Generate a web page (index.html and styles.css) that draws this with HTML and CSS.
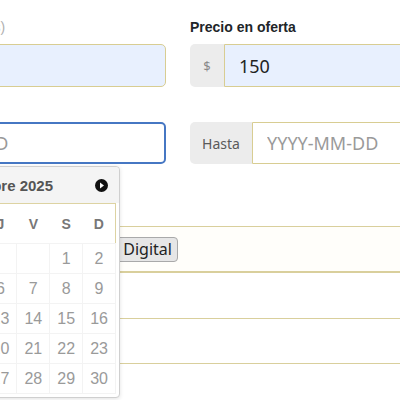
FILE: index.html
```html
<!DOCTYPE html>
<html lang="es">
<head>
<meta charset="utf-8">
<link rel="stylesheet" href="styles.css">
</head>
<body>
<div class="form">
  <div class="row">
    <div class="field">
      <label class="label">Precio base <span class="muted">(sin descuentos)</span></label>
      <div class="group">
        <input class="control autofill" type="text" value="">
      </div>
    </div>
    <div class="field">
      <label class="label">Precio en oferta</label>
      <div class="group">
        <span class="addon addon-sm">$</span>
        <input class="control autofill" type="text" value="150">
      </div>
    </div>
  </div>

  <div class="row row-dates">
    <div class="field">
      <div class="group">
        <span class="addon">Desde</span>
        <input class="control focused" type="text" placeholder="YYYY-MM-DD">
      </div>
      <div class="datepicker">
        <div class="dp-header">
          <span class="dp-nav dp-prev"></span>
          <span class="dp-title">Noviembre 2025</span>
          <span class="dp-nav dp-next">
            <svg width="13" height="13" viewBox="0 0 13 13"><circle cx="6.5" cy="6.5" r="6.5" fill="#111"/><path d="M5 3.6 L9 6.5 L5 9.4 Z" fill="#fff"/></svg>
          </span>
        </div>
        <table class="dp-table">
          <thead>
            <tr><th>L</th><th>M</th><th>X</th><th>J</th><th>V</th><th>S</th><th>D</th></tr>
          </thead>
          <tbody>
            <tr><td></td><td></td><td></td><td></td><td></td><td>1</td><td>2</td></tr>
            <tr><td>3</td><td>4</td><td>5</td><td>6</td><td>7</td><td>8</td><td>9</td></tr>
            <tr><td>10</td><td>11</td><td>12</td><td>13</td><td>14</td><td>15</td><td>16</td></tr>
            <tr><td>17</td><td>18</td><td>19</td><td>20</td><td>21</td><td>22</td><td>23</td></tr>
            <tr><td>24</td><td>25</td><td>26</td><td>27</td><td>28</td><td>29</td><td>30</td></tr>
          </tbody>
        </table>
      </div>
    </div>
    <div class="field">
      <div class="group">
        <span class="addon">Hasta</span>
        <input class="control" type="text" placeholder="YYYY-MM-DD">
      </div>
    </div>
  </div>

  <div class="box">
    <button class="btn" type="button">Tarjeta Digital</button>
  </div>
  <div class="table">
    <div class="trow"></div>
    <div class="trow"></div>
  </div>
</div>
</body>
</html>
```

FILE: styles.css
```css
html, body {
  margin: 0;
  padding: 0;
  background: #fff;
  overflow: hidden;
  width: 400px;
  height: 400px;
}

body {
  font-family: "Noto Sans", "Open Sans", sans-serif;
  color: #212529;
}

.form {
  width: 716px;
  margin-left: -180px;
  padding-top: 17px;
}

.row {
  display: grid;
  grid-template-columns: 346px 346px;
  column-gap: 24px;
}

.row-dates {
  margin-top: 35px;
}

.field {
  position: relative;
  display: flex;
  flex-direction: column;
}

.label {
  font-family: "Liberation Sans", Arial, sans-serif;
  font-weight: bold;
  font-size: 14px;
  line-height: 20px;
  margin-bottom: 7px;
  color: #212529;
}

.muted {
  font-weight: normal;
  color: #b0b0b0;
}

.group {
  display: flex;
  height: 43px;
}

.row-dates .group {
  height: 42px;
}

.addon {
  display: flex;
  align-items: center;
  justify-content: center;
  width: 62px;
  background: #ececec;
  color: #5a5a5a;
  font-size: 14px;
  border-radius: 5px 0 0 5px;
  flex: none;
}

.addon-sm {
  width: 34px;
  color: #8a8a8a;
  font-size: 13px;
}

.control {
  flex: 1;
  min-width: 0;
  box-sizing: border-box;
  height: 100%;
  margin: 0;
  border: 1px solid #d8cd92;
  border-radius: 0 5px 5px 0;
  padding: 0 14px;
  font-family: "Noto Sans", "Open Sans", sans-serif;
  font-size: 18px;
  color: #222;
  background: #fff;
  outline: none;
}

.field > .group > .control:first-child {
  border-radius: 5px;
}

.control::placeholder {
  color: #9a9a9a;
}

.autofill {
  background: #e8f0fe;
}

.focused {
  border: 2px solid #4677c3;
  padding-left: 13px;
}

/* datepicker overlay */
.datepicker {
  position: absolute;
  top: 44px;
  left: 61px;
  z-index: 5;
  box-sizing: border-box;
  width: 239px;
  padding: 3px;
  background: #fff;
  border: 1px solid #cfcfcf;
  border-radius: 4px;
  box-shadow: 0 1px 4px rgba(0, 0, 0, 0.12);
  font-family: "Liberation Sans", Arial, sans-serif;
}

.dp-header {
  display: flex;
  align-items: center;
  justify-content: space-between;
  height: 36px;
  margin: -3px -3px 0 -3px;
  padding: 0 11px;
  background: #f4f4f4;
  border-radius: 4px 4px 0 0;
}

.dp-title {
  font-weight: bold;
  font-size: 15px;
  color: #555;
  margin-right: 10px;
}

.dp-nav {
  display: flex;
  width: 13px;
  height: 13px;
}

.dp-table {
  width: 231px;
  border-collapse: collapse;
  border: 1px solid #ddd3a2;
  table-layout: fixed;
}

.dp-table th {
  height: 39px;
  font-size: 14px;
  font-weight: bold;
  color: #777;
  text-align: center;
  padding: 0;
}

.dp-table td {
  height: 29px;
  padding: 0;
  text-align: center;
  font-size: 16px;
  color: #9a9a9a;
  border: 1px solid #f3f3f3;
}

/* stacked bordered boxes behind */
.box {
  margin-top: 62px;
  height: 44px;
  border-top: 1px solid #d9cf9c;
  border-bottom: 1px solid #d9cf9c;
  background: #fffefa;
  display: flex;
  align-items: center;
  padding-left: 242px;
}

.btn {
  font-family: "Noto Sans", "Open Sans", sans-serif;
  font-size: 16px;
  height: 25px;
  line-height: 20px;
  padding: 0 5px;
  background: #e6e6e6;
  border: 1px solid #a9a9a9;
  border-radius: 4px;
  color: #222;
}

.table {
  border-top: 1px solid #d9cf9c;
}

.trow {
  height: 45px;
  border-bottom: 1px solid #d9cf9c;
}

.trow + .trow {
  height: 44px;
}
```
